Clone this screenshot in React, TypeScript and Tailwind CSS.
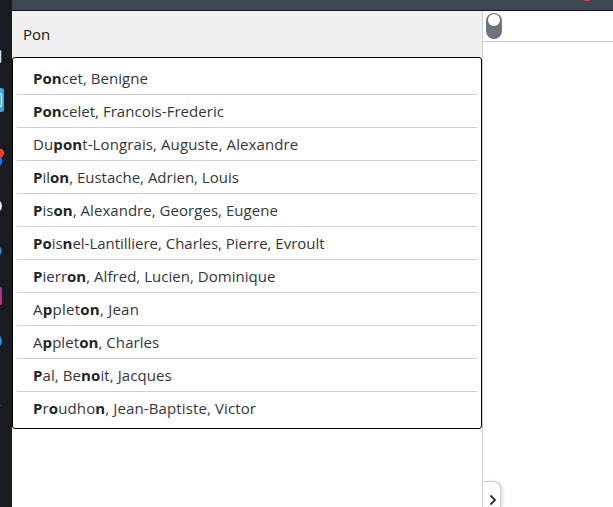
import { Fragment } from "react";

type Person = { name: string; tracking: string };

// Matched letters are wrapped in asterisks.
const people: Person[] = [
  { name: "*Pon*cet, Benigne", tracking: "tracking-[0.06px]" },
  { name: "*Pon*celet, Francois-Frederic", tracking: "tracking-[0.04px]" },
  { name: "Du*pon*t-Longrais, Auguste, Alexandre", tracking: "tracking-[0.1px]" },
  { name: "*P*il*on*, Eustache, Adrien, Louis", tracking: "tracking-[0px]" },
  { name: "*P*is*on*, Alexandre, Georges, Eugene", tracking: "tracking-[0.04px]" },
  { name: "*Po*is*n*el-Lantilliere, Charles, Pierre, Evroult", tracking: "tracking-[-0.02px]" },
  { name: "*P*ierr*on*, Alfred, Lucien, Dominique", tracking: "tracking-[0.03px]" },
  { name: "A*p*plet*on*, Jean", tracking: "tracking-[0.25px]" },
  { name: "A*p*plet*on*, Charles", tracking: "tracking-[0.07px]" },
  { name: "*P*al, Be*no*it, Jacques", tracking: "tracking-[0.09px]" },
  { name: "*P*r*o*udho*n*, Jean-Baptiste, Victor", tracking: "tracking-[0.12px]" },
];

function Match({ name }: { name: string }) {
  return (
    <>
      {name.split("*").map((part, i) =>
        i % 2 ? (
          <b key={i} className="font-bold text-[#212529]">{part}</b>
        ) : (
          <Fragment key={i}>{part}</Fragment>
        ),
      )}
    </>
  );
}

function Rail() {
  return (
    <aside className="relative w-3 shrink-0 overflow-hidden bg-[#181c20]">
      <svg width="12" height="507" className="block">
        <rect x="-10" y="50" width="11.3" height="13" rx="1.5" fill="#d5dde2" />
        <rect x="-20" y="88" width="24" height="24" rx="2.5" fill="#37a6de" />
        <rect x="-10" y="93" width="11.6" height="14" rx="2" fill="#55b3e2" stroke="#fff" />
        <circle cx="-4" cy="161" r="6.3" fill="#087df0" />
        <circle cx="0" cy="153" r="4.2" fill="#f93a32" />
        <circle cx="-5" cy="206" r="7" fill="#eceeed" />
        <circle cx="-5" cy="251" r="6.6" fill="#2197d5" />
        <linearGradient id="rose" x1="0" y1="0" x2="0" y2="1">
          <stop stopColor="#9832b3" />
          <stop offset="1" stopColor="#d82c68" />
        </linearGradient>
        <rect x="-16" y="287" width="18" height="18" rx="2" fill="url(#rose)" />
        <circle cx="-5" cy="341" r="7" fill="#1e93e5" />
        <rect y="405" width="1" height="1" fill="#4b4f53" />
      </svg>
    </aside>
  );
}

export default function App() {
  return (
    <div className="flex h-[507px] w-[613px] overflow-hidden bg-white font-['Open_Sans','Noto_Sans',sans-serif] text-[#33373b]">
      <Rail />
      <div className="flex min-w-0 flex-1 flex-col">
        <header className="flex h-[11px] shrink-0 justify-end border-b border-[#15171a] bg-[#3b4752] pr-[23px]">
          <span className="h-px w-[6px] rounded-b-full bg-[#c9484e]" />
        </header>
        <main className="flex min-h-0 flex-1">
          <section className="flex w-[470px] flex-col">
            <div className="flex h-[46px] shrink-0 items-center bg-[#f0f0f0] pl-[11px] text-[15px] leading-6 text-[#151515]">
              Pon
            </div>
            <div className="bg-[linear-gradient(#f0f0f0_50%,white_50%)]">
              <ul className="h-[372px] rounded-[3px] border border-black bg-white px-1 pt-1">
                {people.map((p) => (
                  <li
                    key={p.name}
                    className="flex h-[33px] items-center whitespace-pre border-b border-[#d0d0d0] pl-4 text-[15px] last:border-transparent"
                  >
                    <span className={p.tracking}><Match name={p.name} /></span>
                  </li>
                ))}
              </ul>
            </div>
          </section>
          <section className="flex flex-1 flex-col justify-between border-l border-[#cfcfcf]">
            <div className="h-[31px] border-b border-[#cfcfcf] pl-[3px] pt-[2px]">
              <div className="h-[26px] w-4 rounded-full bg-[#6c757d] px-[2px] pt-px">
                <div className="h-3 w-3 rounded-full bg-white" />
              </div>
            </div>
            <button className="flex h-[26px] w-[18px] items-center justify-center rounded-tr-[8px] border-r border-t border-[#cfcfcf] bg-white pl-[2px] pt-[11px] shadow-[2px_0_3px_rgba(0,0,0,0.12)]">
              <svg width="8" height="12" viewBox="0 0 8 12" fill="none" stroke="#2b2f33" strokeWidth="1.8">
                <path d="M1.5 1.5 6 6 1.5 10.5" />
              </svg>
            </button>
          </section>
        </main>
      </div>
    </div>
  );
}
